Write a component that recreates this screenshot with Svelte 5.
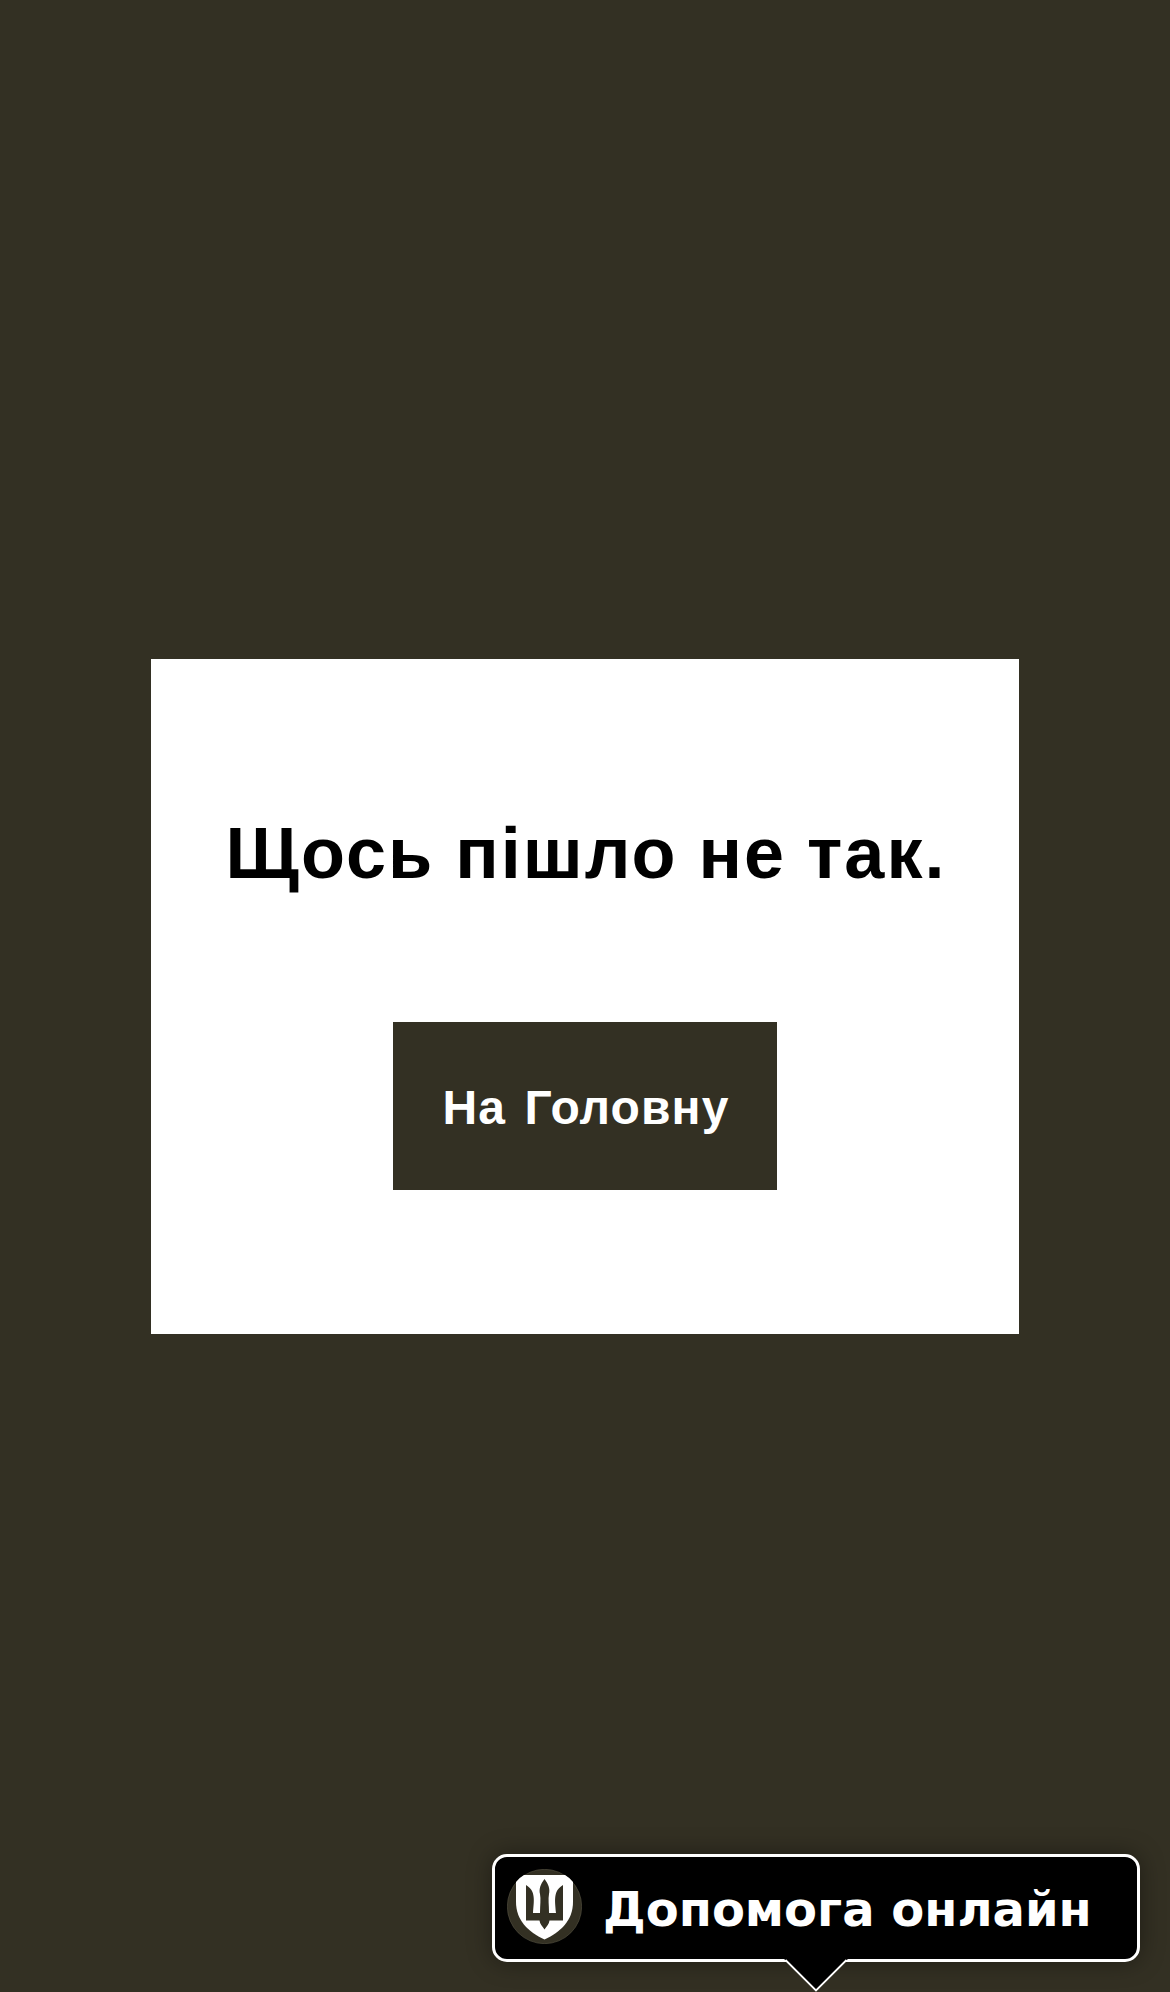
<script>
  const title = 'Щось пішло не так.';
  const home = 'На Головну';
  const help = 'Допомога онлайн';
</script>

<main class="page">
  <section class="card">
    <h1>{title}</h1>
    <button class="home" type="button">{home}</button>
  </section>

  <aside class="chat">
    <svg class="emblem" viewBox="0 0 75 75" aria-hidden="true">
      <circle cx="37.5" cy="37.5" r="37.2" fill="#333023" stroke="#65614f" stroke-width=".5" />
      <path fill="#fff" d="M17 6H58Q62.500 8.500 66 13V33C66 51 54 63 37.500 70.500C21 63 9 51 9 33V13Q12.500 8.500 17 6Z" />
      <path
        fill="#333023"
        d="M37.5 10C33.5 15 31.8 20 33 25C34 30 33 36 33 44H26C27 31 29 22 19 16V51.5H32.5C33 55 35 57 37.5 60.5C40 57 42 55 42.5 51.5H56V16C46 22 48 31 49 44H42C42 36 41 30 42 25C43.2 20 41.5 15 37.5 10Z"
      />
    </svg>
    <span class="label">{help}</span>
    <svg class="pointer" viewBox="0 0 64 34" aria-hidden="true">
      <path d="M0 0H64L62 1.5L32 31.5L2 1.5Z" fill="#000" />
      <path d="M1.5 1L32 31.5L62.5 1" fill="none" stroke="#fff" stroke-width="1.8" />
    </svg>
  </aside>
</main>

<style>
  :global(body) {
    margin: 0;
    background: #333023;
  }
  .page {
    box-sizing: border-box;
    height: 1992px;
    padding: 659px 30px 30px;
    display: flex;
    flex-direction: column;
    align-items: center;
    justify-content: space-between;
    overflow: hidden;
    background: #333023;
  }
  .card {
    box-sizing: border-box;
    width: 868px;
    height: 675px;
    padding: 144px 0;
    display: flex;
    flex-direction: column;
    align-items: center;
    justify-content: space-between;
    background: #fff;
  }
  h1 {
    margin: 0;
    padding-left: 2px;
    font: 700 72px/100px 'Liberation Sans', sans-serif;
    letter-spacing: 2px;
    word-spacing: -1px;
    white-space: nowrap;
    color: #000;
  }
  .home {
    width: 384px;
    height: 168px;
    padding: 4px 0 0 2px;
    border: 0;
    background: #333023;
    color: #fff;
    font: 700 48px/60px 'Liberation Sans', sans-serif;
    letter-spacing: 1.1px;
    word-spacing: 4px;
    white-space: nowrap;
  }
  .chat {
    position: relative;
    align-self: flex-end;
    box-sizing: border-box;
    width: 648px;
    height: 108px;
    padding: 0 12px;
    display: flex;
    align-items: center;
    gap: 21px;
    border: 3px solid #fff;
    border-radius: 15px;
    background: #000;
    box-shadow: 0 0 24px rgba(0, 0, 0, 0.4);
  }
  .emblem {
    width: 75px;
    height: 75px;
    flex: none;
    margin-bottom: 3px;
  }
  .label {
    padding-top: 2px;
    font: 700 48px/60px 'DejaVu Sans', sans-serif;
    color: #fff;
    white-space: nowrap;
  }
  .pointer {
    position: absolute;
    left: 289px;
    top: 102px;
    width: 64px;
    height: 34px;
  }
</style>
